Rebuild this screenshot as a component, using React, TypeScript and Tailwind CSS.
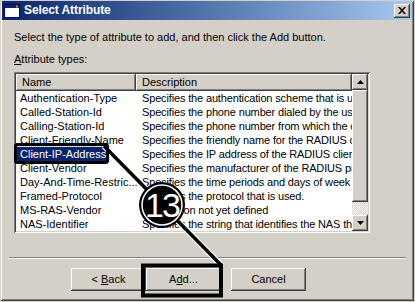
import React from 'react';

const rows = [
  ['Authentication-Type', 'Specifies the authentication scheme that is used to verify the user.'],
  ['Called-Station-Id', 'Specifies the phone number dialed by the user.'],
  ['Calling-Station-Id', 'Specifies the phone number from which the call originated.'],
  ['Client-Friendly-Name', 'Specifies the friendly name for the RADIUS client.'],
  ['Client-IP-Address', 'Specifies the IP address of the RADIUS client.'],
  ['Client-Vendor', 'Specifies the manufacturer of the RADIUS proxy or NAS.'],
  ['Day-And-Time-Restric...', 'Specifies the time periods and days of week during which a user is allowed.'],
  ['Framed-Protocol', 'Specifies the protocol that is used.'],
  ['MS-RAS-Vendor', 'Description not yet defined'],
  ['NAS-Identifier', 'Specifies the string that identifies the NAS that originated the request.'],
];

const raised =
  'shadow-[inset_-1px_-1px_0_#404040,inset_1px_1px_0_#ffffff,inset_-2px_-2px_0_#808080,inset_2px_2px_0_#d4d0c8]';

function WinButton({ children }: { children: React.ReactNode }) {
  return (
    <div className={`w-[75px] h-[23px] bg-[#d4d0c8] flex items-center justify-center ${raised}`}>
      {children}
    </div>
  );
}

export default function App() {
  return (
    <div className="w-[415px] h-[302px] bg-[#d4d0c8] relative overflow-hidden font-['Liberation_Sans',Arial,sans-serif] text-[11px] text-black leading-[13px]">
      {/* window frame */}
      <div className="w-[414px] h-[301px] pt-[1px] px-[2px] shadow-[inset_1px_1px_0_#d4d0c8,inset_-1px_-1px_0_#404040,inset_2px_2px_0_#ffffff,inset_-2px_-2px_0_#808080]">
        {/* title bar */}
        <div className="h-[19px] bg-gradient-to-r from-[#0a246a] to-[#a6caf0] flex items-center pl-[2px] pr-[2px]">
          <svg width="16" height="14" viewBox="0 0 16 14" className="shrink-0">
            <rect x="0.5" y="0.5" width="15" height="13" fill="#ffffff" stroke="#000080" />
            <rect x="1" y="1" width="14" height="3" fill="#0a246a" />
            <rect x="12" y="1.5" width="2" height="2" fill="#ff8000" />
          </svg>
          <span className="ml-[4px] text-white font-bold text-[12px] tracking-[-0.1px]">Select Attribute</span>
          <div className="ml-auto w-[16px] h-[14px] bg-[#d4d0c8] flex items-center justify-center shadow-[inset_-1px_-1px_0_#404040,inset_1px_1px_0_#ffffff,inset_-2px_-2px_0_#808080]">
            <svg width="8" height="7" viewBox="0 0 8 7">
              <path d="M0 0 L2 0 L4 2.5 L6 0 L8 0 L5 3.5 L8 7 L6 7 L4 4.5 L2 7 L0 7 L3 3.5 Z" fill="#000" />
            </svg>
          </div>
        </div>

        <div className="pl-[12px] pt-[11px]">
          <p>Select the type of attribute to add, and then click the Add button.</p>
          <p className="mt-[9px]">
            <span className="underline">A</span>ttribute types:
          </p>

          {/* list view */}
          <div className="mt-[6px] w-[356px] h-[161px] bg-white p-[2px] shadow-[inset_1px_1px_0_#808080,inset_-1px_-1px_0_#ffffff,inset_2px_2px_0_#404040,inset_-2px_-2px_0_#d4d0c8] flex">
            <div className="w-[336px] overflow-hidden flex flex-col">
              <div className="flex h-[17px] shrink-0">
                <div className={`w-[120px] bg-[#d4d0c8] pl-[6px] flex items-center ${raised}`}>Name</div>
                <div className={`w-[216px] bg-[#d4d0c8] pl-[6px] flex items-center ${raised}`}>Description</div>
              </div>
              {rows.map(([name, desc], i) => (
                <div key={name} className="flex h-[14px] items-center whitespace-nowrap">
                  <div className="w-[120px] pl-[1px] shrink-0">
                    {i === 4 ? (
                      <span className="bg-[#0a246a] text-white px-[3px] py-[1px] outline-1 outline-dotted outline-[#a6caf0]">{name}</span>
                    ) : (
                      <span className="pl-[3px]">{name}</span>
                    )}
                  </div>
                  <div className="pl-[6px] overflow-hidden tracking-[-0.15px]">{desc}</div>
                </div>
              ))}
            </div>
            {/* scrollbar */}
            <div className="w-[16px] flex flex-col">
              <div className={`h-[16px] bg-[#d4d0c8] flex items-center justify-center ${raised}`}>
                <svg width="7" height="4" viewBox="0 0 7 4"><path d="M3.5 0 L7 4 L0 4 Z" fill="#000" /></svg>
              </div>
              <div className={`h-[112px] bg-[#d4d0c8] ${raised}`} />
              <div className="flex-1 bg-[repeating-conic-gradient(#d4d0c8_0_25%,#ffffff_0_50%)] bg-[length:2px_2px]" />
              <div className={`h-[16px] bg-[#d4d0c8] flex items-center justify-center ${raised}`}>
                <svg width="7" height="4" viewBox="0 0 7 4"><path d="M0 0 L7 0 L3.5 4 Z" fill="#000" /></svg>
              </div>
            </div>
          </div>
        </div>

        {/* separator */}
        <div className="mt-[24px] ml-[7px] w-[397px] h-[2px] border-t border-t-[#808080] border-b border-b-white" />

        {/* buttons */}
        <div className="mt-[9px] ml-[69px] flex">
          <WinButton>
            &lt; <span className="underline ml-[3px]">B</span>ack
          </WinButton>
          <WinButton>
            A<span className="underline">d</span>d...
          </WinButton>
          <div className="ml-[10px]">
            <WinButton>Cancel</WinButton>
          </div>
        </div>
      </div>

      {/* callout overlay */}
      <svg className="absolute inset-0 pointer-events-none" width="415" height="302" viewBox="0 0 415 302">
        <line x1="104" y1="146" x2="222" y2="266" stroke="#fff" strokeWidth="6" />
        <line x1="104" y1="146" x2="222" y2="266" stroke="#000" strokeWidth="3.5" />
        <rect x="15.5" y="144.5" width="92" height="18" rx="2" fill="none" stroke="#000" strokeWidth="3" />
        <rect x="143" y="265.5" width="78" height="30" fill="none" stroke="#000" strokeWidth="4" />
        <circle cx="162" cy="205" r="23" fill="#000" />
        <circle cx="162" cy="205" r="20" fill="none" stroke="#fff" strokeWidth="1.5" />
        <text x="162" y="217" textAnchor="middle" fill="#fff" fontSize="34" fontFamily="Liberation Sans, Arial, sans-serif" letterSpacing="-2">13</text>
      </svg>
    </div>
  );
}
